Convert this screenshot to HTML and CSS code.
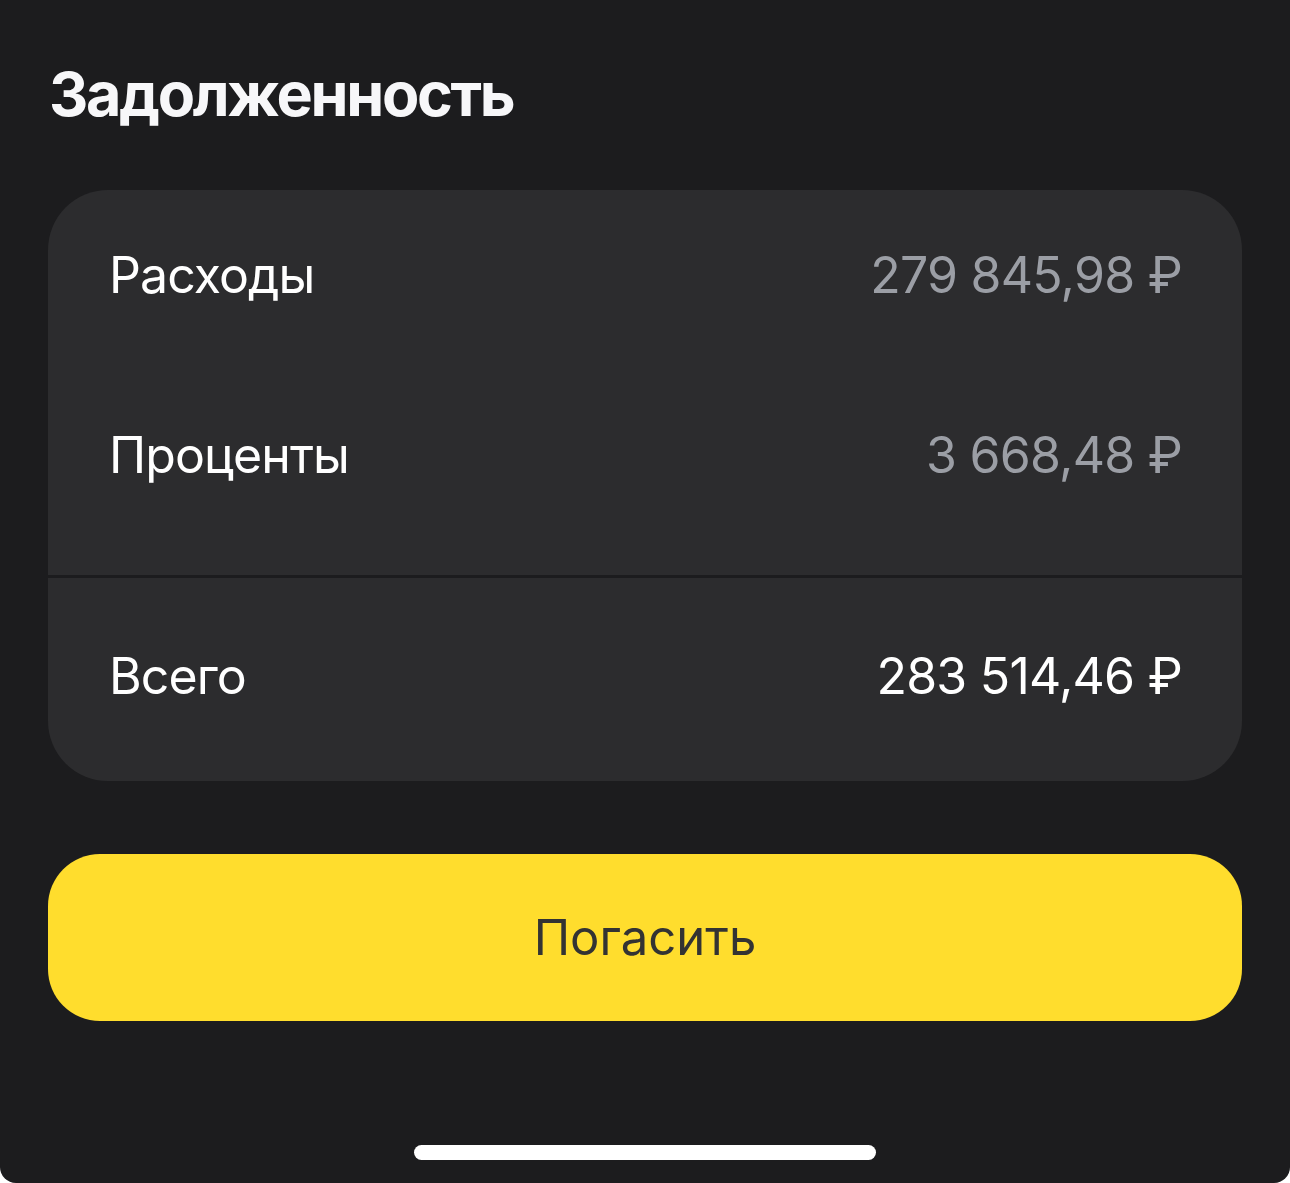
FILE: index.html
```html
<!DOCTYPE html>
<html lang="ru">
<head>
<meta charset="utf-8">
<title>Задолженность</title>
<link rel="stylesheet" href="styles.css">
</head>
<body>
<div class="screen">
  <h1 class="title">Задолженность</h1>
  <div class="card">
    <div class="section top">
      <div class="row"><span class="label">Расходы</span><span class="value muted">279 845,98 ₽</span></div>
      <div class="row"><span class="label">Проценты</span><span class="value muted">3 668,48 ₽</span></div>
    </div>
    <div class="divider"></div>
    <div class="section bottom">
      <div class="row"><span class="label">Всего</span><span class="value">283 514,46 ₽</span></div>
    </div>
  </div>
  <button class="pay">Погасить</button>
  <div class="home-wrap"><div class="home"></div></div>
</div>
</body>
</html>
```

FILE: styles.css
```css
html, body {
  margin: 0;
  padding: 0;
  background: #ffffff;
}
body {
  width: 1290px;
  height: 1183px;
  overflow: hidden;
}
.screen {
  width: 1290px;
  height: 1183px;
  box-sizing: border-box;
  background: #1c1c1e;
  border-radius: 0 0 16px 16px;
  padding: 57px 48px 0 48px;
  font-family: Inter, "Noto Sans", sans-serif;
  color: #ffffff;
}
.title {
  margin: 0 0 58px 1px;
  font-size: 61px;
  font-weight: 700;
  line-height: 75px;
  letter-spacing: -2.3px;
  color: #f7f7f9;
}
.card {
  background: #2c2c2e;
  border-radius: 60px;
  overflow: hidden;
}
.section.top {
  padding: 0 0 35px 0;
  display: flex;
  flex-direction: column;
  gap: 10px;
}
.section.bottom {
  padding: 13px 0 20px 0;
}
.row {
  height: 170px;
  display: flex;
  align-items: center;
  justify-content: space-between;
  padding: 0 60px 0 61px;
  font-size: 50px;
  line-height: 60px;
}
.label {
  color: #ffffff;
  letter-spacing: -0.9px;
}
.value {
  color: #ffffff;
  letter-spacing: -0.75px;
}
.value.muted {
  color: #9b9ea5;
}
.divider {
  height: 3px;
  background: #1c1c1e;
}
.pay {
  display: block;
  width: 100%;
  height: 167px;
  margin-top: 73px;
  border: none;
  border-radius: 52px;
  background: #ffdd2d;
  color: #333333;
  font-family: Inter, "Noto Sans", sans-serif;
  font-size: 49px;
  line-height: 60px;
  padding: 0;
}
.home-wrap {
  display: flex;
  justify-content: center;
  margin-top: 124px;
}
.home {
  width: 462px;
  height: 15px;
  border-radius: 8px;
  background: #ffffff;
}
```
